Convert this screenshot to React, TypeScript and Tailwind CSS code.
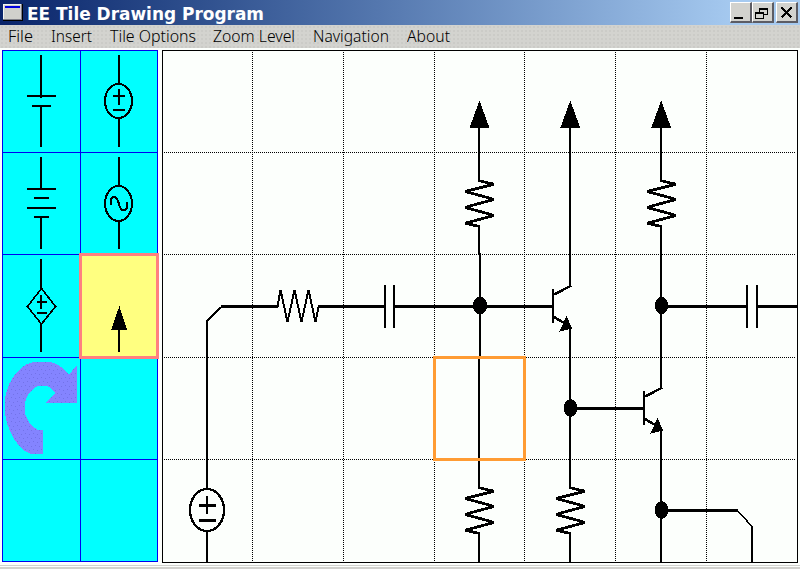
import React from "react";

const MENU = [
  { label: "File", box: "w-[43px]", len: 25 },
  { label: "Insert", box: "w-[59px]", len: 41 },
  { label: "Tile Options", box: "w-[103px]", len: 86 },
  { label: "Zoom Level", box: "w-[100px]", len: 82 },
  { label: "Navigation", box: "w-[94px]", len: 76 },
  { label: "About", box: "w-[60px]", len: 43 },
];

function CaptionButton({ children, className = "" }: { children: React.ReactNode; className?: string }) {
  return (
    <button
      className={`h-[21px] border-t border-l border-r-2 border-b-2 border-t-white border-l-white border-r-[#5c5c64] border-b-[#5c5c64] bg-[#d2d2ce] ${className}`}
    >
      <svg className="block h-[18px] w-[19px]" viewBox="0 0 19 18" shapeRendering="crispEdges">
        {children}
      </svg>
    </button>
  );
}

function TitleBar() {
  return (
    <header className="flex h-[25px] items-center bg-linear-to-r from-[#0a246a] to-[#a6caf0] to-[92%] pl-[3px]">
      <svg className="h-[18px] w-5 shrink-0" viewBox="0 0 20 18" shapeRendering="crispEdges">
        <rect width="20" height="17" fill="#000" />
        <rect width="19" height="16" fill="#808088" />
        <rect width="18" height="15" fill="#f4f4f0" />
        <rect x="1" y="1" width="17" height="14" fill="#d0d0cc" />
        <rect x="2" y="2" width="15" height="2" fill="#0000e0" />
      </svg>
      <h1 className="ml-1 flex-1">
        <svg className="block h-[25px] w-[260px]" viewBox="0 0 260 25">
          <text
            x="0"
            y="19.5"
            textLength="237"
            lengthAdjust="spacingAndGlyphs"
            className="fill-white font-['DejaVu_Sans_Condensed','DejaVu_Sans',sans-serif] text-[18px] font-bold"
          >
            EE Tile Drawing Program
          </text>
        </svg>
      </h1>
      <div className="mr-[2px] flex">
        <CaptionButton className="w-[22px]">
          <path d="M3 14h9v2H3z" />
        </CaptionButton>
        <CaptionButton className="w-[22px]">
          <path d="M6 5h9v2H6zM6 5h1v4H6zM14 5h1v7h-1zM11 11h4v1h-4zM2 9h9v2H2zM2 9h1v7H2zM10 9h1v7h-1zM2 15h9v1H2z" />
        </CaptionButton>
        <CaptionButton className="ml-[2px] w-[22px]">
          <path d="M4.5 4.5L14.5 14.5M14.5 4.5L4.5 14.5" stroke="#000" strokeWidth="2.2" />
        </CaptionButton>
      </div>
    </header>
  );
}

function MenuBar() {
  return (
    <nav className="flex h-[23px] bg-[#d3d3cf] bg-[radial-gradient(circle,#cbcbc7_0.8px,transparent_1px)] bg-[size:4px_4px] pl-2">
      {MENU.map((m) => (
        <svg key={m.label} className={`h-[23px] shrink-0 ${m.box}`}>
          <text
            x="0"
            y="17"
            textLength={m.len}
            lengthAdjust="spacingAndGlyphs"
            className="fill-black font-['Noto_Sans',sans-serif] text-[16.5px] font-light"
          >
            {m.label}
          </text>
        </svg>
      ))}
    </nav>
  );
}

function Tile({ top, right, children }: { top: number; right?: boolean; children?: React.ReactNode }) {
  return (
    <div className="relative border-r border-b border-[#0000f0] bg-[#00ffff]">
      <svg
        className="block h-[101px] w-[76px]"
        viewBox={`${right ? 81 : 3} ${top} 76 101`}
        shapeRendering="crispEdges"
        fill="none"
        stroke="#000"
        strokeWidth="2"
      >
        {children}
      </svg>
    </div>
  );
}

function Palette() {
  return (
    <aside className="ml-[2px] grid h-[512px] w-[156px] shrink-0 grid-cols-[78px_77px] grid-rows-[102px_102px_103px_102px_102px] border-t border-l border-[#0000f0]">
      <Tile top={51}>
        <path d="M41 55V98M27 96H56M32 106H51M41 106V147" />
      </Tile>
      <Tile top={51} right>
        <path d="M119 55V84M119 118V147M113 96H125M119 89V105M113 110H125" />
        <ellipse cx="118.5" cy="101" rx="13.5" ry="17" />
      </Tile>
      <Tile top={153}>
        <path d="M41 157V190M27 189H56M34 198H49M27 208H56M34 217H49M41 217V249" />
      </Tile>
      <Tile top={153} right>
        <path d="M119 157V186M119 221V249" />
        <ellipse cx="118.5" cy="203.5" rx="13.5" ry="17.5" />
        <path d="M110.5 205V201Q111 197 114 197Q117 197 119 204Q120 210 123.5 210Q127 210 127 206V202" />
      </Tile>
      <Tile top={255}>
        <path d="M41 259V288M41 324V352M37 302H47M41 295V309M37 313H47" />
        <path d="M41.5 288.5L55.5 306.5L41.5 324L27.5 306.5Z" strokeWidth="1.6" />
      </Tile>
      <div className="relative border-r border-b border-[#0000f0]">
        <div className="absolute -top-[2px] -left-[2px] z-10 h-[106px] w-[80px] border-[3px] border-[#ff8080] bg-[#ffff80]">
          <svg className="block h-[100px] w-[74px]" viewBox="82 256 74 100" shapeRendering="crispEdges">
            <path d="M119.4 306L127 330H111Z" />
            <path d="M118 330H120V352H118Z" />
          </svg>
        </div>
      </div>
      <Tile top={358}>
        <defs>
          <pattern id="stipple" width="8" height="8" patternUnits="userSpaceOnUse">
            <rect width="8" height="8" fill="#8484ff" stroke="none" />
            <path d="M1 1h1v1h-1zM5 2h1v1h-1zM3 5h1v1h-1zM7 6h1v1h-1z" fill="#7272e8" stroke="none" />
          </pattern>
        </defs>
        <path
          d="M43 454H31L24 450.5Q15 443 10 431Q5 421 5 408V398Q8 382 17 372Q26 362 36 362H51Q60 364 69 374.5L77 365V403H46L55 393Q50 386 46 386H38Q31 389 27 397L25 403V414Q29 424 34 427.5L38 430H43Z"
          fill="url(#stipple)"
          stroke="none"
        />
      </Tile>
      <Tile top={358} right />
      <Tile top={460} />
      <Tile top={460} right />
    </aside>
  );
}

function VerticalResistor({ x, y }: { x: number; y: number }) {
  return (
    <path
      transform={`translate(${x} ${y})`}
      d="M0 0V.6L15 4.3L-14 11.4L15 19.4L-14 27.4L15 35.4L-14 43.3L0 46.3V47"
      strokeWidth="2.8"
      strokeLinejoin="bevel"
    />
  );
}

function Transistor({ x, y }: { x: number; y: number }) {
  return (
    <g transform={`translate(${x} ${y})`}>
      <path d="M0 -17V17" />
      <path d="M1 -11.5L18.5 -20.5M1 11L12 17.5" strokeWidth="2.5" />
      <path d="M13.5 9.5L19 22.5L6.5 25.5Z" fill="#000" stroke="none" />
    </g>
  );
}

function PowerArrow({ x }: { x: number }) {
  return <path d={`M${x} 100.5L${x + 10} 128H${x - 10}Z`} fill="#000" stroke="none" />;
}

function Drawing() {
  return (
    <main className="ml-1 h-[513px] w-[636px] shrink-0 border border-black bg-[#fcfffc]">
      <svg
        className="block h-[511px] w-[634px]"
        viewBox="163 51 634 511"
        shapeRendering="crispEdges"
        fill="none"
        stroke="#000"
        strokeWidth="2"
      >
        <g strokeWidth="1" strokeDasharray="1 1">
          {[252, 343, 434, 524, 615, 706].map((x) => (
            <path key={x} d={`M${x + 0.5} 52V562`} />
          ))}
          {[152, 254, 357, 459].map((y) => (
            <path key={y} d={`M164 ${y + 0.5}H796`} />
          ))}
        </g>

        {/* signal source and input coupling */}
        <path d="M207 562V531M207 489V321L222 306.5M207 496V514" />
        <path d="M199 520.5H216M199 505.5H216" strokeWidth="3" />
        <ellipse cx="207" cy="510" rx="17" ry="21" strokeWidth="2.4" />
        <path d="M221 306.5H278M318 306.5H385M394 306.5H553" strokeWidth="3" />
        <path d="M277.5 307L280.5 290L287.5 322L294.5 290L301.5 322L308.5 290L315.5 322L318.5 307" />
        <path d="M385 285V328M394 285V328" />

        {/* bias divider */}
        <PowerArrow x={479.5} />
        <path d="M479 128V180M479 226V254M480 253V357M479 357V487M479 533V562" />
        <VerticalResistor x={479} y={180} />
        <VerticalResistor x={479} y={487} />
        <ellipse cx="480" cy="305.5" rx="7.2" ry="8.7" fill="#000" stroke="none" />

        {/* first stage */}
        <PowerArrow x={570.3} />
        <path d="M570 128V286M570 326V487M570 533V562" />
        <Transistor x={553} y={306} />
        <VerticalResistor x={570} y={487} />
        <ellipse cx="570.5" cy="408" rx="6.8" ry="9" fill="#000" stroke="none" />
        <path d="M576 408.5H644" strokeWidth="3" />

        {/* second stage and output coupling */}
        <PowerArrow x={661.2} />
        <path d="M661 128V180M661 226V388M661 428V562" />
        <VerticalResistor x={661} y={180} />
        <Transistor x={644} y={408} />
        <ellipse cx="661.5" cy="305.5" rx="6.7" ry="8.7" fill="#000" stroke="none" />
        <ellipse cx="661.5" cy="510" rx="6.7" ry="9" fill="#000" stroke="none" />
        <path d="M667 306.5H747M757 306.5H797M667 510.5H738" strokeWidth="3" />
        <path d="M747 285V328M757 285V328M752 526V562" />
        <path d="M738 511L752 526.5" strokeWidth="1.5" />

        <rect x="434.5" y="357.5" width="90" height="102" stroke="#ff9c34" strokeWidth="3" />
      </svg>
    </main>
  );
}

export default function App() {
  return (
    <div className="flex h-[569px] w-[800px] flex-col overflow-hidden bg-[#fcfffc]">
      <TitleBar />
      <MenuBar />
      <div className="flex h-[517px] pt-[2px]">
        <Palette />
        <Drawing />
      </div>
      <footer className="flex h-1 flex-col">
        <div className="h-px bg-[#d1d1cd]" />
        <div className="h-px bg-[#fcfffc]" />
        <div className="h-[2px] bg-[#d1d1cd]" />
      </footer>
    </div>
  );
}
